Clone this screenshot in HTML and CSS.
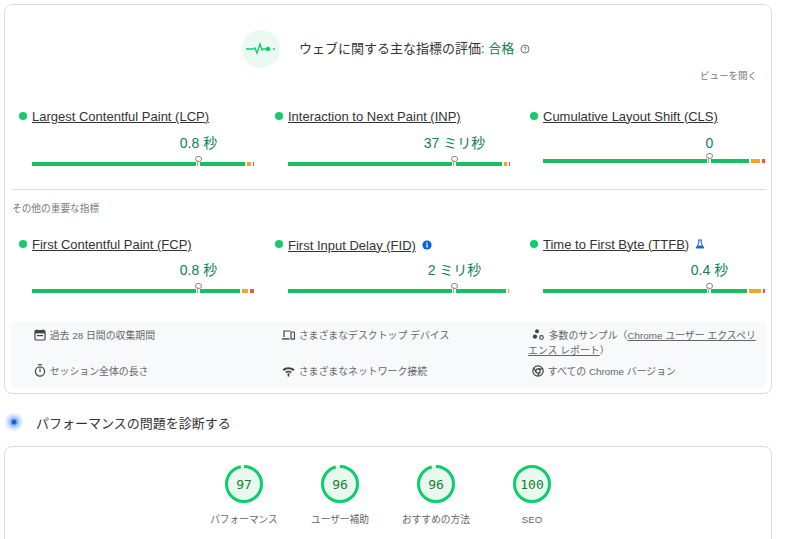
FILE: index.html
```html
<!DOCTYPE html>
<html lang="ja">
<head>
    <title>PageSpeed Insights</title>
    <link rel="stylesheet" href="styles.css">
</head>
<body>
    <section class="card">
        <div class="cwv-header">
            <div class="cwv-icon">
                <svg width="32" height="14" viewBox="0 0 32 14">
                    <path d="M1 7h7l2-1 2 5 3-9 2 6 1-1h5" fill="none" stroke="#0cce6b" stroke-width="1.3"/>
                    <circle cx="23" cy="7" r="2.3" fill="#0cce6b"/>
                    <circle cx="29" cy="7" r="1" fill="#0cce6b"/>
                </svg>
            </div>
            <h2 class="cwv-title">ウェブに関する主な指標の評価: <span class="pass">合格</span></h2>
            <svg class="help-icon" width="10" height="10" viewBox="0 0 10 10">
                <circle cx="5" cy="5" r="4" fill="none" stroke="#666" stroke-width="0.9"/>
                <path d="M3.7 4.1c0-.8.6-1.2 1.3-1.2s1.3.4 1.3 1.1c0 .9-1.3.9-1.3 2" fill="none" stroke="#666" stroke-width="0.8"/>
                <circle cx="5" cy="7.2" r="0.5" fill="#666"/>
            </svg>
        </div>
        <div class="open-view">ビューを開く</div>

        <div class="metrics">
            <div class="metric">
                <div class="metric-head"><span class="dot"></span><a class="metric-name">Largest Contentful Paint (LCP)</a></div>
                <div class="metric-value">0.8 秒</div>
                <div class="bar">
                    <span class="seg good" style="width: 213px"></span><span class="seg ok" style="width: 4px"></span><span class="seg poor" style="width: 1px"></span>
                    <span class="marker"></span>
                </div>
            </div>
            <div class="metric">
                <div class="metric-head"><span class="dot"></span><a class="metric-name">Interaction to Next Paint (INP)</a></div>
                <div class="metric-value">37 ミリ秒</div>
                <div class="bar">
                    <span class="seg good" style="width: 215px"></span><span class="seg ok" style="width: 3px"></span><span class="seg poor" style="width: 1px"></span>
                    <span class="marker"></span>
                </div>
            </div>
            <div class="metric">
                <div class="metric-head"><span class="dot"></span><a class="metric-name">Cumulative Layout Shift (CLS)</a></div>
                <div class="metric-value">0</div>
                <div class="bar bar-raised">
                    <span class="seg good" style="width: 207px"></span><span class="seg ok" style="width: 9px"></span><span class="seg poor" style="width: 3px"></span>
                    <span class="marker"></span>
                </div>
            </div>
        </div>

        <hr class="divider">
        <div class="other-title">その他の重要な指標</div>

        <div class="metrics">
            <div class="metric">
                <div class="metric-head"><span class="dot"></span><a class="metric-name">First Contentful Paint (FCP)</a></div>
                <div class="metric-value">0.8 秒</div>
                <div class="bar">
                    <span class="seg good" style="width: 210px"></span><span class="seg ok" style="width: 6px"></span><span class="seg poor" style="width: 4px"></span>
                    <span class="marker"></span>
                </div>
            </div>
            <div class="metric">
                <div class="metric-head metric-head-low"><span class="dot"></span><a class="metric-name">First Input Delay (FID)</a>
                    <svg class="note-icon" width="10" height="10" viewBox="0 0 10 10">
                        <circle cx="5" cy="5" r="4.6" fill="#0b5fd8"/>
                        <rect x="4.4" y="4.3" width="1.3" height="3.2" fill="#fff"/>
                        <rect x="4.4" y="2.4" width="1.3" height="1.2" fill="#fff"/>
                    </svg>
                </div>
                <div class="metric-value">2 ミリ秒</div>
                <div class="bar">
                    <span class="seg good" style="width: 218px"></span><span class="seg ok" style="width: 1px"></span>
                    <span class="marker"></span>
                </div>
            </div>
            <div class="metric">
                <div class="metric-head"><span class="dot"></span><a class="metric-name">Time to First Byte (TTFB)</a>
                    <svg class="note-icon" width="10" height="10" viewBox="0 0 10 10">
                        <path d="M3 1h4M3.8 1v3L1.2 9h7.6L6.2 4V1" fill="none" stroke="#1a66d8" stroke-width="1"/>
                        <path d="M2.6 6.5h4.8L8.6 9H1.4z" fill="#1a66d8"/>
                    </svg>
                </div>
                <div class="metric-value">0.4 秒</div>
                <div class="bar">
                    <span class="seg good" style="width: 206px"></span><span class="seg ok" style="width: 12px"></span><span class="seg poor" style="width: 2px"></span>
                    <span class="marker"></span>
                </div>
            </div>
        </div>

        <div class="facts">
            <div class="fact">
                <svg class="fact-icon" width="12" height="12" viewBox="0 0 12 12">
                    <path d="M3 .5v2M9 .5v2" stroke="#444" stroke-width="1.2"/>
                    <rect x="1" y="1.5" width="10" height="9.5" rx="1" fill="none" stroke="#444" stroke-width="1.2"/>
                    <rect x="1" y="2" width="10" height="2.4" fill="#444"/>
                    <rect x="3" y="6" width="6" height="1.2" fill="#444"/>
                </svg>
                過去 28 日間の収集期間
            </div>
            <div class="fact">
                <svg class="fact-icon" width="13" height="12" viewBox="0 0 13 12">
                    <path d="M2 8V2h6.5" fill="none" stroke="#444" stroke-width="1.2"/>
                    <path d="M0 9.2h7.5v1.4H0z" fill="#444"/>
                    <rect x="9" y="3" width="3.5" height="7.2" rx="0.6" fill="none" stroke="#444" stroke-width="1.2"/>
                </svg>
                さまざまなデスクトップ デバイス
            </div>
            <div class="fact fact-wrap">
                <svg class="fact-icon" width="13" height="12" viewBox="0 0 13 12">
                    <circle cx="5" cy="2.2" r="2" fill="#444"/>
                    <circle cx="3" cy="7.6" r="2.2" fill="#444"/>
                    <circle cx="9.5" cy="8.4" r="1.8" fill="none" stroke="#444" stroke-width="1.1"/>
                </svg>
                多数のサンプル（<a class="fact-link">Chrome ユーザー エクスペリエンス レポート</a>）
            </div>
            <div class="fact">
                <svg class="fact-icon" width="12" height="13" viewBox="0 0 12 13">
                    <path d="M4 .7h4" stroke="#444" stroke-width="1.2"/>
                    <circle cx="6" cy="7.500" r="4.600" fill="none" stroke="#444" stroke-width="1.200"/>
                    <path d="M6 4.500v3.400" stroke="#444" stroke-width="1.200"/>
                </svg>
                セッション全体の長さ
            </div>
            <div class="fact">
                <svg class="fact-icon" width="13" height="12" viewBox="0 0 13 12">
                    <path d="M.5 4.600C3.600 1.400 9.400 1.400 12.500 4.600L11 6C8.600 3.600 4.400 3.600 2 6z" fill="#444"/>
                    <path d="M3.200 7C5 5.200 8 5.200 9.800 7L8.500 8.300C7.200 7 5.800 7 4.500 8.300z" fill="#444"/>
                    <path d="M5.600 8.200h1.800V11.500H5.600z" fill="#444"/>
                </svg>
                さまざまなネットワーク接続
            </div>
            <div class="fact fact-indent">
                <svg class="fact-icon" width="12" height="12" viewBox="0 0 12 12">
                    <circle cx="6" cy="6" r="5.200" fill="none" stroke="#444" stroke-width="1.200"/>
                    <circle cx="6" cy="6" r="2.200" fill="none" stroke="#444" stroke-width="1.200"/>
                    <path d="M6 3.800h4.700M4.100 7.100L1.800 3M7.900 7.100L5.500 11" stroke="#444" stroke-width="1.200"/>
                </svg>
                すべての Chrome バージョン
            </div>
        </div>
    </section>

    <div class="diagnose">
        <span class="diagnose-icon"></span>
        <h2 class="diagnose-title">パフォーマンスの問題を診断する</h2>
    </div>

    <section class="card card-scores">
        <div class="score">
            <div class="gauge">
                <svg class="gauge-ring" width="38" height="38" viewBox="0 0 38 38"><circle cx="19" cy="19" r="17.500" pathLength="100" stroke-dasharray="97 100"/></svg>
                <span class="gauge-num">97</span>
            </div>
            <div class="score-label">パフォーマンス</div>
        </div>
        <div class="score">
            <div class="gauge">
                <svg class="gauge-ring" width="38" height="38" viewBox="0 0 38 38"><circle cx="19" cy="19" r="17.500" pathLength="100" stroke-dasharray="96 100"/></svg>
                <span class="gauge-num">96</span>
            </div>
            <div class="score-label">ユーザー補助</div>
        </div>
        <div class="score">
            <div class="gauge">
                <svg class="gauge-ring" width="38" height="38" viewBox="0 0 38 38"><circle cx="19" cy="19" r="17.500" pathLength="100" stroke-dasharray="96 100"/></svg>
                <span class="gauge-num">96</span>
            </div>
            <div class="score-label">おすすめの方法</div>
        </div>
        <div class="score">
            <div class="gauge">
                <svg class="gauge-ring" width="38" height="38" viewBox="0 0 38 38"><circle cx="19" cy="19" r="17.500" pathLength="100" stroke-dasharray="100 100"/></svg>
                <span class="gauge-num">100</span>
            </div>
            <div class="score-label">SEO</div>
        </div>
    </section>
</body>
</html>
```

FILE: styles.css
```css
* {
    box-sizing: border-box;
    margin: 0;
    padding: 0;
}

html, body {
    height: 539px;
    overflow: hidden;
}

body {
    background: #fff;
    color: #333;
    font-family: "Liberation Sans", "Noto Sans CJK JP", sans-serif;
    padding: 4px 15px 0 4px;
}

.card {
    border: 1px solid #dadce0;
    border-radius: 8px;
    padding: 0 5px 5px 6px;
}

.cwv-header {
    display: flex;
    align-items: center;
    padding: 25px 0 0 231px;
}

.cwv-icon {
    width: 38px;
    height: 38px;
    border-radius: 50%;
    background: #eafaf2;
    display: flex;
    align-items: center;
    justify-content: center;
    margin-right: 19px;
}

.cwv-title {
    font-size: 13px;
    font-weight: 400;
    color: #333;
    margin-bottom: 3px;
}

.pass {
    color: #0f8055;
}

.help-icon {
    margin-left: 6px;
    margin-top: -1px;
}

.open-view {
    font-size: 9.500px;
    line-height: 14px;
    color: #777;
    text-align: right;
    padding-right: 9px;
    margin-top: 1px;
}

.metrics {
    display: grid;
    grid-template-columns: 256px 255px 1fr;
    margin-left: 8px;
}

.open-view + .metrics {
    margin-top: 24px;
}

.metric-head {
    display: flex;
    align-items: center;
    height: 18px;
}

.metric-head-low .metric-name {
    margin-top: 2px;
}

.metric-head-low .note-icon {
    margin-top: 2px;
}

.dot {
    width: 8px;
    height: 8px;
    border-radius: 50%;
    background: #0cce6b;
    margin-right: 5px;
    flex-shrink: 0;
}

.metric-name {
    font-size: 13px;
    color: #333;
    text-decoration: underline;
}

.note-icon {
    margin-left: 6px;
}

/* centred on the 75% mark of the bar below */
.metric-value {
    width: 222px;
    margin: 8px 0 0 13px;
    padding-left: 111px;
    text-align: center;
    font-size: 14px;
    line-height: 20px;
    color: #0f8055;
    white-space: nowrap;
}

.other-title + .metrics .metric-value {
    margin-top: 7px;
}

.bar {
    position: relative;
    display: flex;
    gap: 2px;
    height: 4px;
    width: 222px;
    margin: 9px 0 0 13px;
}

.bar-raised {
    margin-top: 6px;
    margin-bottom: 3px;
}

.seg {
    display: block;
    height: 100%;
}

.good {
    background: #17bf63;
}

.ok {
    background: #f4a622;
}

.poor {
    background: #e8534a;
}

.marker {
    position: absolute;
    left: 163px;
    top: -6.500px;
    width: 5px;
    height: 10.500px;
    background: linear-gradient(#fff, #fff) center bottom / 4px 6px no-repeat;
}

.marker::before {
    content: "";
    position: absolute;
    left: 0;
    top: 0;
    width: 4.500px;
    height: 4.500px;
    border: 1px solid #888;
    border-radius: 50%;
    background: #fff;
}

.marker::after {
    content: "";
    position: absolute;
    left: 2px;
    top: 4.500px;
    width: 1px;
    height: 6px;
    background: #aaa;
}

.divider {
    border: 0;
    border-top: 1px solid #dadce0;
    margin: 23px 0 0;
}

.other-title {
    font-size: 9.700px;
    line-height: 14px;
    color: #777;
    margin: 12px 0 0 1px;
}

.other-title + .metrics {
    margin-top: 19px;
}

.facts {
    display: grid;
    grid-template-columns: 248px 246px 1fr;
    grid-template-rows: auto auto;
    background: #f8f9fb;
    margin-top: 29px;
    padding: 6px 8px 9px 23px;
    font-size: 9.900px;
    line-height: 15px;
    color: #666;
    border-radius: 2px;
    row-gap: 6px;
}

.fact-icon {
    vertical-align: -2px;
    margin-right: 1px;
}

.fact-wrap .fact-icon {
    margin-left: 4px;
}

.fact-indent {
    padding-left: 4px;
}

.fact-link {
    text-decoration: underline;
}

.diagnose {
    display: flex;
    align-items: center;
    height: 30px;
    margin-top: 13px;
}

.diagnose-icon {
    width: 20px;
    height: 20px;
    border-radius: 50%;
    background: radial-gradient(circle, #1a56d8 0 1.500px, #8fbdf7 3.500px, #d4e5fb 6.500px, #fff 10px);
}

.diagnose-title {
    font-size: 13px;
    font-weight: 400;
    color: #333;
    margin-left: 12px;
}

.card-scores {
    display: flex;
    justify-content: center;
    margin-top: 9px;
    padding: 18px 0 30px;
}

.score {
    width: 96px;
    display: flex;
    flex-direction: column;
    align-items: center;
}

.gauge {
    position: relative;
    width: 38px;
    height: 38px;
    border-radius: 50%;
    background: #e8f8ef;
    display: flex;
    align-items: center;
    justify-content: center;
}

.gauge-ring {
    position: absolute;
    inset: 0;
    transform: rotate(-90deg);
}

.gauge-ring circle {
    fill: none;
    stroke: #0cce6b;
    stroke-width: 3;
}

.gauge-num {
    font-family: "DejaVu Sans Mono", monospace;
    font-size: 13px;
    color: #1a7f2a;
}

.score-label {
    font-size: 9.700px;
    line-height: 14px;
    color: #666;
    margin-top: 10px;
}
```
